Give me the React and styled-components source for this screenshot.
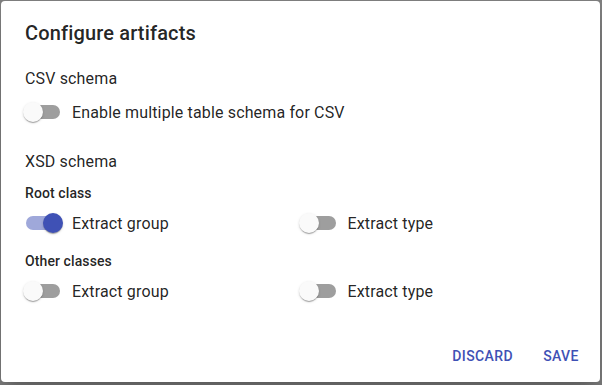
import React, { useState } from "react";
import styled, { createGlobalStyle } from "styled-components";

const Global = createGlobalStyle`
  html, body { margin: 0; padding: 0; }
  body {
    background: #7f7f7f;
    font-family: Roboto, "Liberation Sans", Arial, sans-serif;
    width: 602px;
    height: 385px;
    overflow: hidden;
  }
  #root { padding: 1px 2px 3px 1px; box-sizing: border-box; height: 385px; }
`;

const Paper = styled.div`
  box-sizing: border-box;
  width: 599px;
  height: 381px;
  background: #fff;
  border-radius: 4px;
  display: flex;
  flex-direction: column;
  box-shadow: 0px 11px 15px -7px rgba(0,0,0,0.2), 0px 24px 38px 3px rgba(0,0,0,0.14);
`;

const Title = styled.h2`
  margin: 0;
  padding: 16px 24px 17px;
  font-size: 20px;
  font-weight: 500;
  line-height: 32px;
  letter-spacing: 0.0075em;
  color: rgba(0,0,0,0.87);
`;

const Content = styled.div`
  flex: 1;
  padding: 0 24px;
  display: flex;
  flex-direction: column;
`;

const Section = styled.div`
  font-size: 16px;
  line-height: 24px;
  letter-spacing: 0.00938em;
  color: rgba(0,0,0,0.87);
  margin-top: ${p => p.$mt || 0}px;
  margin-bottom: ${p => p.$mb || 0}px;
`;

const Sub = styled.div`
  font-size: 14px;
  font-weight: 500;
  line-height: 22px;
  letter-spacing: 0.00714em;
  color: rgba(0,0,0,0.87);
  margin-top: ${p => p.$mt || 0}px;
`;

const Grid = styled.div`
  display: grid;
  grid-template-columns: 1fr 1fr;
`;

const Label = styled.label`
  display: inline-flex;
  align-items: center;
  margin-left: -11px;
  margin-right: 16px;
  cursor: pointer;
  height: 38px;
  font-size: 16px;
  letter-spacing: 0.00938em;
  color: rgba(0,0,0,0.87);
`;

const SwitchRoot = styled.span`
  position: relative;
  display: inline-flex;
  box-sizing: border-box;
  width: 58px;
  height: 38px;
  padding: 12px;
  flex-shrink: 0;
`;

const Track = styled.span`
  width: 100%;
  height: 100%;
  border-radius: 7px;
  background: ${p => (p.$on ? "#9fa8da" : "#9e9e9e")};
`;

const Thumb = styled.span`
  position: absolute;
  top: 9px;
  left: ${p => (p.$on ? 29 : 9)}px;
  width: 20px;
  height: 20px;
  border-radius: 50%;
  background: ${p => (p.$on ? "#3f51b5" : "#fafafa")};
  box-shadow: 0px 2px 1px -1px rgba(0,0,0,0.2), 0px 1px 1px 0px rgba(0,0,0,0.14), 0px 1px 3px 0px rgba(0,0,0,0.12);
  transition: left 150ms;
`;

const Actions = styled.div`
  display: flex;
  justify-content: flex-end;
  align-items: center;
  gap: 8px;
  padding: 8px 7px 8px 8px;
`;

const Button = styled.button`
  border: 0;
  background: transparent;
  min-width: 64px;
  height: 36px;
  padding: 6px 8px;
  border-radius: 4px;
  font-family: inherit;
  font-size: 14px;
  font-weight: 500;
  letter-spacing: 0.02857em;
  text-transform: uppercase;
  color: #3f51b5;
  cursor: pointer;
`;

function Toggle({ label, initial = false }) {
  const [on, setOn] = useState(initial);
  return (
    <Label onClick={() => setOn(!on)}>
      <SwitchRoot>
        <Track $on={on} />
        <Thumb $on={on} />
      </SwitchRoot>
      {label}
    </Label>
  );
}

export default function App() {
  return (
    <>
      <Global />
      <Paper>
        <Title>Configure artifacts</Title>
        <Content>
          <Section $mt={1} $mb={2}>CSV schema</Section>
          <div>
            <Toggle label="Enable multiple table schema for CSV" />
          </div>
          <Section $mt={19}>XSD schema</Section>
          <Sub $mt={8}>Root class</Sub>
          <Grid>
            <div><Toggle label="Extract group" initial /></div>
            <div><Toggle label="Extract type" /></div>
          </Grid>
          <Sub $mt={8}>Other classes</Sub>
          <Grid>
            <div><Toggle label="Extract group" /></div>
            <div><Toggle label="Extract type" /></div>
          </Grid>
        </Content>
        <Actions>
          <Button>Discard</Button>
          <Button>Save</Button>
        </Actions>
      </Paper>
    </>
  );
}
